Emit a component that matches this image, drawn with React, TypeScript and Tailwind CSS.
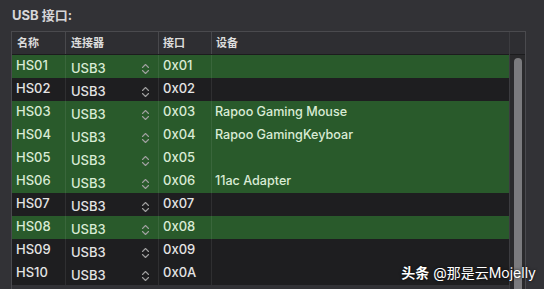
const rows = [
  { name: 'HS01', port: '0x01', device: '', on: true },
  { name: 'HS02', port: '0x02', device: '', on: false },
  { name: 'HS03', port: '0x03', device: 'Rapoo Gaming Mouse', on: true },
  { name: 'HS04', port: '0x04', device: 'Rapoo GamingKeyboar', on: true },
  { name: 'HS05', port: '0x05', device: '', on: true },
  { name: 'HS06', port: '0x06', device: '11ac Adapter', on: true },
  { name: 'HS07', port: '0x07', device: '', on: false },
  { name: 'HS08', port: '0x08', device: '', on: true },
  { name: 'HS09', port: '0x09', device: '', on: false },
  { name: 'HS10', port: '0x0A', device: '', on: false },
];

function Chevrons() {
  return (
    <svg width="9" height="12" viewBox="0 0 9 12" fill="none" stroke="#a0a0a0" strokeWidth="1.1" strokeLinecap="round" strokeLinejoin="round">
      <path d="M1.5 4.5 L4.5 1.5 L7.5 4.5" />
      <path d="M1.5 7.5 L4.5 10.5 L7.5 7.5" />
    </svg>
  );
}

export default function App() {
  return (
    <div
      className="relative w-[544px] h-[289px] overflow-hidden bg-[#323236] text-[#e2e2e2]"
      style={{ fontFamily: 'Inter, "Noto Sans CJK SC", sans-serif' }}
    >
      <div className="h-[31px] pl-[12px] pt-[6px] text-[13px] font-bold text-[#d6d6d8]">USB 接口:</div>

      <div className="ml-[11px] w-[515px] flex border-t border-l border-r border-[#4a4a4e]">
        <div className="flex-1 flex flex-col">
          {/* header */}
          <div className="h-[23px] flex bg-[#2e2e32] border-b border-[#1c1c1e] text-[11px] font-semibold text-[#dcdcdc]">
            <div className="w-[53px] pl-[5px] flex items-center">名称</div>
            <div className="w-[93px] pl-[5px] flex items-center border-l border-[#48484c]">连接器</div>
            <div className="w-[53px] pl-[4px] flex items-center border-l border-[#48484c]">接口</div>
            <div className="flex-1 pl-[4px] flex items-center border-l border-[#48484c]">设备</div>
          </div>
          {/* rows */}
          {rows.map((r) => (
            <div
              key={r.name}
              className={`h-[23px] flex text-[13px] font-medium ${r.on ? 'bg-[#295a2b] text-[#d9ebd5]' : 'bg-[#1e1e20] text-[#e4e4e4]'}`}
            >
              <div className="w-[53px] pl-[4px] flex items-center pb-[1px]">{r.name}</div>
              <div className="w-[93px] pl-[5px] pr-[8px] flex items-center justify-between pt-[5px] border-l border-[#ffffff14]">
                <span>USB3</span>
                <Chevrons />
              </div>
              <div className="w-[53px] pl-[4px] flex items-center pb-[1px] border-l border-[#ffffff14]">{r.port}</div>
              <div className="flex-1 pl-[3px] flex items-center pb-[1px] border-l border-[#ffffff14] text-[12.6px]">{r.device}</div>
            </div>
          ))}
        </div>
        {/* scrollbar */}
        <div className="w-[16px] flex flex-col border-l border-[#3c3c40]">
          <div className="h-[23px] bg-[#2e2e32] border-b border-[#1c1c1e]" />
          <div className="flex-1 bg-[#2a2a2c] pt-[3px] flex justify-center">
            <div className="w-[8px] h-[260px] rounded-full bg-[#7b7b7e]" />
          </div>
        </div>
      </div>

      <div
        className="absolute right-[8px] bottom-[6px] text-[14px] text-white"
        style={{ textShadow: '0 0 3px rgba(0,0,0,0.9)' }}
      >
        <span className="font-bold">头条</span> @那是云Mojelly
      </div>
    </div>
  );
}
